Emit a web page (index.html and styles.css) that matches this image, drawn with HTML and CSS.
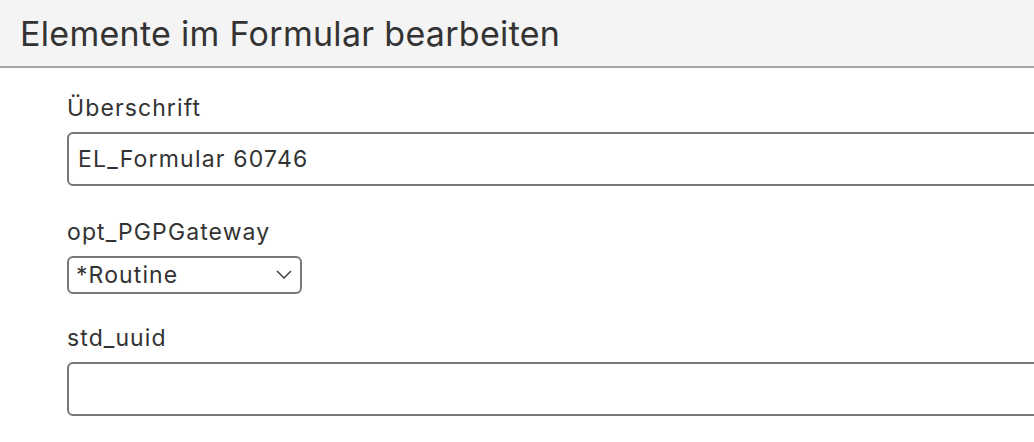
FILE: index.html
```html
<!DOCTYPE html>
<html lang="de">
  <head>
    <meta charset="UTF-8" />
    <meta name="viewport" content="width=device-width, initial-scale=1.0" />
    <title>Elemente im Formular bearbeiten</title>
    <link rel="stylesheet" href="styles.css">
  </head>
  <body>
    <div class="page-header">
      <h1>Elemente im Formular bearbeiten</h1>
    </div>

    <form class="edit-form">
      <div class="field">
        <label for="ueberschrift">Überschrift</label>
        <input id="ueberschrift" class="text-input" type="text" value="EL_Formular 60746" />
      </div>

      <div class="field field-select">
        <label for="pgp-gateway">opt_PGPGateway</label>
        <div class="select-wrap">
          <select id="pgp-gateway">
            <option>*Routine</option>
          </select>
          <svg class="chevron" width="16" height="9" viewBox="0 0 16 9">
            <path d="M1 1 L8 8 L15 1" fill="none" stroke="#444" stroke-width="1.5" />
          </svg>
        </div>
      </div>

      <div class="field">
        <label for="std-uuid">std_uuid</label>
        <input id="std-uuid" class="text-input" type="text" value="" />
      </div>
    </form>
  </body>
</html>
```

FILE: styles.css
```css
* {
  margin: 0;
  padding: 0;
  box-sizing: border-box;
  font-family: Inter, "Noto Sans", sans-serif;
}

body {
  background-color: #fff;
  color: #333;
  overflow: hidden;
}

.page-header {
  height: 68px;
  background-color: #f4f4f4;
  border-bottom: 2px solid #a4a4a4;
  padding-left: 20px;
  display: flex;
  align-items: center;
}

h1 {
  font-size: 34px;
  font-weight: 400;
  color: #333;
  letter-spacing: 0.3px;
}

.edit-form {
  padding: 27px 0 0 67px;
}

.field {
  display: flex;
  flex-direction: column;
  margin-bottom: 33px;
}

.field-select {
  margin-bottom: 31px;
}

label {
  font-size: 23px;
  line-height: 26px;
  letter-spacing: 1.1px;
  margin-bottom: 11px;
  color: #333;
}

.text-input {
  width: 1000px;
  height: 54px;
  border: 2px solid #777;
  border-radius: 6px;
  padding: 0 9px;
  font-size: 23px;
  letter-spacing: 1.2px;
  color: #333;
  background: #fff;
}

.select-wrap {
  position: relative;
  width: 235px;
}

select {
  appearance: none;
  width: 235px;
  height: 38px;
  border: 2px solid #777;
  border-radius: 6px;
  padding: 0 7px;
  font-size: 23px;
  letter-spacing: 1.1px;
  color: #333;
  background: #fff;
}

.chevron {
  position: absolute;
  right: 10px;
  top: 14px;
  pointer-events: none;
}
```
